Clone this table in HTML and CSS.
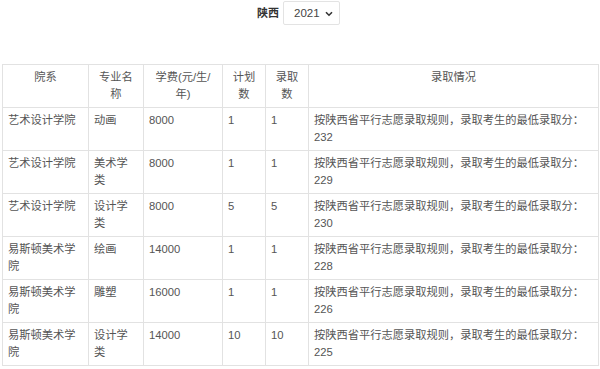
FILE: index.html
```html
<!DOCTYPE html>
<html lang="zh-CN">
<head>
<meta charset="utf-8">
<title>录取情况</title>
<link rel="stylesheet" href="styles.css">
</head>
<body>
<div class="page">
  <div class="filter">
    <span class="prov">陕西</span>
    <span class="select-wrap">
      <select class="year">
        <option>2021</option>
      </select>
      <svg class="chev" width="8" height="6" viewBox="0 0 8 6"><path d="M1 1.2 L4 4.2 L7 1.2" fill="none" stroke="#333" stroke-width="1.6"/></svg>
    </span>
  </div>
  <table class="score">
    <colgroup>
      <col class="c1"><col class="c2"><col class="c3"><col class="c4"><col class="c5"><col class="c6">
    </colgroup>
    <thead>
      <tr><th>院系</th><th>专业名称</th><th>学费(元/生/年)</th><th>计划数</th><th>录取数</th><th>录取情况</th></tr>
    </thead>
    <tbody>
      <tr><td>艺术设计学院</td><td>动画</td><td>8000</td><td>1</td><td>1</td><td>按陕西省平行志愿录取规则，录取考生的最低录取分：232</td></tr>
      <tr><td>艺术设计学院</td><td>美术学类</td><td>8000</td><td>1</td><td>1</td><td>按陕西省平行志愿录取规则，录取考生的最低录取分：229</td></tr>
      <tr><td>艺术设计学院</td><td>设计学类</td><td>8000</td><td>5</td><td>5</td><td>按陕西省平行志愿录取规则，录取考生的最低录取分：230</td></tr>
      <tr><td>易斯顿美术学院</td><td>绘画</td><td>14000</td><td>1</td><td>1</td><td>按陕西省平行志愿录取规则，录取考生的最低录取分：228</td></tr>
      <tr><td>易斯顿美术学院</td><td>雕塑</td><td>16000</td><td>1</td><td>1</td><td>按陕西省平行志愿录取规则，录取考生的最低录取分：226</td></tr>
      <tr><td>易斯顿美术学院</td><td>设计学类</td><td>14000</td><td>10</td><td>10</td><td>按陕西省平行志愿录取规则，录取考生的最低录取分：225</td></tr>
    </tbody>
  </table>
</div>
</body>
</html>
```
FILE: styles.css
```css
html, body {
  margin: 0;
  padding: 0;
  background: #fff;
}
body {
  font-family: "Liberation Sans", "Noto Sans CJK SC", sans-serif;
  font-size: 11.25px;
  line-height: 17px;
  color: #555;
}
.page {
  padding: 1px 2px 0 2px;
}
.filter {
  display: flex;
  justify-content: center;
  align-items: center;
  gap: 4px;
  height: 24px;
  padding-right: 3px;
}
.prov {
  font-weight: bold;
  font-size: 11px;
  color: #333;
}
.select-wrap {
  position: relative;
  display: inline-block;
}
.year {
  appearance: none;
  -webkit-appearance: none;
  width: 57px;
  height: 24px;
  border: 1px solid #e3e3e3;
  border-radius: 2px;
  background: #fff;
  color: #444;
  font-family: "Liberation Sans", sans-serif;
  font-size: 11.5px;
  padding: 0 0 0 10px;
  margin: 0;
  display: block;
}
.chev {
  position: absolute;
  right: 7px;
  top: 10px;
  pointer-events: none;
}
.score {
  margin-top: 39px;
  width: 596px;
  border-collapse: collapse;
  table-layout: fixed;
}
.c1 { width: 86px; }
.c2 { width: 55px; }
.c3 { width: 79px; }
.c4 { width: 43px; }
.c5 { width: 43px; }
.c6 { width: 290px; }
.score th,
.score td {
  border: 1px solid #e2e2e2;
  padding: 4px 5px;
  vertical-align: top;
  text-align: left;
  font-weight: normal;
  height: 34px;
}
.score th {
  text-align: center;
}
```
